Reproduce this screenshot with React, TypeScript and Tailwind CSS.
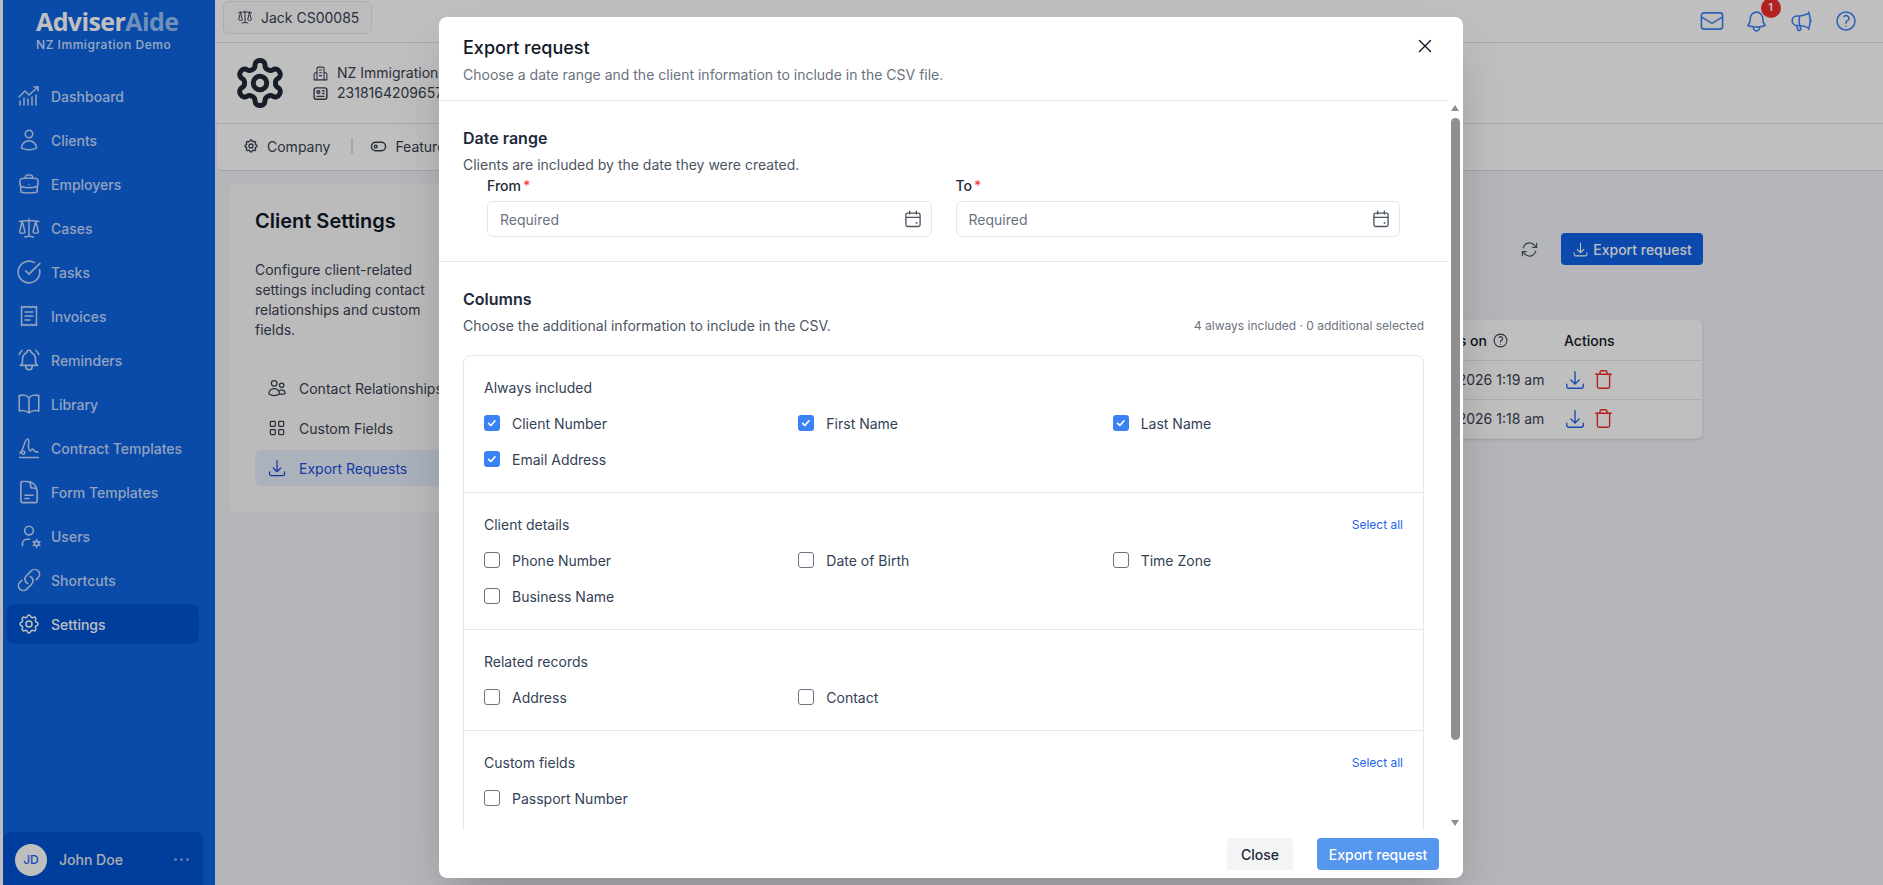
import { ReactNode } from 'react';
import {
  HiOutlineArrowDownTray,
  HiOutlineArrowPath,
  HiOutlineBell,
  HiOutlineBookOpen,
  HiOutlineBriefcase,
  HiOutlineDocumentText,
  HiOutlineEnvelope,
  HiOutlineLink,
  HiOutlineMegaphone,
  HiOutlineQuestionMarkCircle,
  HiOutlineScale,
  HiOutlineUser,
  HiOutlineUsers,
  HiOutlineXMark,
} from 'react-icons/hi2';
import {
  TbBellRinging,
  TbId,
  TbLayoutGrid,
  TbSettings,
  TbToggleLeft,
  TbUserCog,
} from 'react-icons/tb';
import { LuCircleCheckBig, LuSettings, LuTrash } from 'react-icons/lu';

function DashboardIcon({ className }: { className?: string }) {
  return (
    <svg viewBox="0 0 24 24" fill="none" stroke="currentColor" strokeWidth="1.5" strokeLinecap="round" strokeLinejoin="round" className={className}>
      <path d="M2 13l6-6 4 4 9-8" />
      <path d="M17 3h4v4" />
      <path d="M3 21v-4M7 21v-7M11 21v-6M15 21v-8M19 21v-10" />
    </svg>
  );
}

function ReceiptIcon({ className }: { className?: string }) {
  return (
    <svg viewBox="0 0 24 24" fill="none" stroke="currentColor" strokeWidth="1.5" strokeLinecap="round" strokeLinejoin="round" className={className}>
      <path d="M4.5 2.5l1.9 1 1.9-1 1.800 1 1.900-1 1.900 1 1.800-1 1.900 1 1.900-1v19l-1.900-1-1.900 1-1.800-1-1.900 1-1.900-1-1.800 1-1.900-1-1.900 1z" />
      <path d="M8 8h8M8 12h8M8 16h5" />
    </svg>
  );
}

function SignatureIcon({ className }: { className?: string }) {
  return (
    <svg viewBox="0 0 24 24" fill="none" stroke="currentColor" strokeWidth="1.5" strokeLinecap="round" strokeLinejoin="round" className={className}>
      <path d="M3 17.500c0-2 2-3 3.500-2.500s2 2.500.5 3-3.500-.500-1.500-5C7 9.500 8.500 3 10.500 3c1.500 0 1.500 3 1 6-.4 2.500.5 6 1.500 6s1.500-2 2.500-2 1 2 2.500 2.500 3 .5 3 .5" />
      <path d="M2.500 21.500h19" />
    </svg>
  );
}

function BuildingIcon({ className }: { className?: string }) {
  return (
    <svg viewBox="0 0 24 24" fill="none" stroke="currentColor" strokeWidth="1.5" strokeLinecap="round" strokeLinejoin="round" className={className}>
      <path d="M7 21V5a2 2 0 0 1 2-2h6a2 2 0 0 1 2 2v16" />
      <path d="M7 11H5a2 2 0 0 0-2 2v8h18v-8a2 2 0 0 0-2-2h-2" />
      <path d="M10.500 7h3M10.500 11h3M10.500 15h3" />
    </svg>
  );
}

function CalendarIcon() {
  return (
    <svg viewBox="0 0 24 24" fill="none" stroke="currentColor" strokeWidth="1.6" strokeLinecap="round" strokeLinejoin="round" className="size-[20px] text-[#4b5563]">
      <rect x="3.500" y="5" width="17" height="16" rx="2" />
      <path d="M8 2.500V6M16 2.500V6M3.500 10h17" />
      <path d="M16 16.500h.5v.5H16z" fill="currentColor" />
    </svg>
  );
}

const navItems = [
  { label: 'Dashboard', icon: <DashboardIcon className="size-[24px]" /> },
  { label: 'Clients', icon: <HiOutlineUser className="size-[24px]" /> },
  { label: 'Employers', icon: <HiOutlineBriefcase className="size-[24px]" /> },
  { label: 'Cases', icon: <HiOutlineScale className="size-[24px]" /> },
  { label: 'Tasks', icon: <LuCircleCheckBig className="size-[26px] stroke-[1.5]" /> },
  { label: 'Invoices', icon: <ReceiptIcon className="size-[24px]" /> },
  { label: 'Reminders', icon: <TbBellRinging className="size-[26px] stroke-[1.5]" /> },
  { label: 'Library', icon: <HiOutlineBookOpen className="size-[26px]" /> },
  { label: 'Contract Templates', icon: <SignatureIcon className="size-[24px]" /> },
  { label: 'Form Templates', icon: <HiOutlineDocumentText className="size-[26px]" /> },
  { label: 'Users', icon: <TbUserCog className="size-[26px] stroke-[1.5]" /> },
  { label: 'Shortcuts', icon: <HiOutlineLink className="size-[26px]" /> },
  { label: 'Settings', icon: <TbSettings className="size-[24px] stroke-[1.5]" />, active: true },
];

function Sidebar() {
  return (
    <aside className="flex h-full w-[212px] shrink-0 flex-col bg-[#0e63e2]">
      <div className="h-[76px] pl-[33px] pt-[6px]">
        <div className="font-['Open_Sans'] text-[25px] leading-[30px] font-bold tracking-[-0.6px] text-white">
          Adviser<span className="text-[#93c0f8]">Aide</span>
        </div>
        <div className="mt-[1px] text-[12px] leading-[16px] font-medium tracking-[0.55px] text-[#cfe3ff]">NZ Immigration Demo</div>
      </div>
      <nav className="flex flex-col gap-[4px] px-[4px]">
        {navItems.map((item) => (
          <div
            key={item.label}
            className={`flex h-[40px] w-[192px] items-center rounded-lg pl-[9px] text-[14px] font-medium ${
              item.active ? 'bg-[#0053d2] text-white' : 'text-[#c3dafe]'
            }`}
          >
            <span className="flex w-[26px] justify-center">{item.icon}</span>
            <span className="ml-[9px]">{item.label}</span>
          </div>
        ))}
      </nav>
      <div className="mt-auto flex h-[53px] w-[200px] items-center rounded-t-lg bg-[#0053d2] pl-[12px] pr-[14px] pt-[2px]">
        <div className="flex size-[32px] items-center justify-center rounded-full bg-white text-[12px] font-medium text-[#2563eb]">JD</div>
        <span className="ml-[12px] text-[14px] font-medium text-[#e5e7eb]">John Doe</span>
        <span className="ml-auto flex gap-[3px]">
          <i className="size-[3px] rounded-full bg-[#7ea6e0]" />
          <i className="size-[3px] rounded-full bg-[#7ea6e0]" />
          <i className="size-[3px] rounded-full bg-[#7ea6e0]" />
        </span>
      </div>
    </aside>
  );
}

function TopBar() {
  return (
    <header className="flex h-[43px] items-center border-b border-[#e0e2e6] bg-white pl-[8px] pr-[15px]">
      <div className="-mt-[8px] flex h-[33px] w-[149px] items-center gap-[8px] rounded-md border border-[#e5e7eb] bg-[#fbfbfc] pl-[13px] text-[14px] text-[#374151]">
        <HiOutlineScale className="size-[16px]" />
        Jack CS00085
      </div>
      <div className="ml-auto flex items-center text-[#3b82f6]">
        <span className="flex w-[44.5px] justify-center">
          <HiOutlineEnvelope className="size-[26px]" />
        </span>
        <span className="relative flex w-[44.5px] justify-center">
          <HiOutlineBell className="size-[25px]" />
          <span className="absolute -top-[11px] left-[26px] flex size-[20px] items-center justify-center rounded-full bg-[#ef2c2c] text-[11px] font-semibold text-white">1</span>
        </span>
        <span className="flex w-[44.5px] justify-center">
          <HiOutlineMegaphone className="size-[25px]" />
        </span>
        <span className="flex w-[44.5px] justify-center">
          <HiOutlineQuestionMarkCircle className="size-[24px]" />
        </span>
      </div>
    </header>
  );
}

function PageHeader() {
  return (
    <>
      <div className="flex h-[81px] items-center border-b border-[#e0e2e6] bg-white pl-[18px]">
        <LuSettings className="size-[54px] stroke-[2.2] text-[#1f2937]" />
        <div className="ml-[25px] flex flex-col gap-[2px] text-[14px] leading-[18px] text-[#374151]">
          <div className="flex items-center gap-[8px]">
            <BuildingIcon className="size-[17px]" />
            NZ Immigration Services Ltd
          </div>
          <div className="flex items-center gap-[8px]">
            <TbId className="size-[17px]" />
            2318164209657
          </div>
        </div>
      </div>
      <div className="ml-[2px] flex h-[47px] items-center rounded-bl-md border-b border-[#d8dbe2] bg-white pb-[2px] pl-[26px] text-[14px] text-[#374151]">
        <TbSettings className="mr-[8px] size-[16px]" />
        Company
        <span className="ml-[21px] mr-[17px] h-[16px] w-[2px] bg-[#d8dbe2]" />
        <TbToggleLeft className="mr-[8px] size-[17px]" />
        Features
      </div>
    </>
  );
}

function SettingsCard() {
  return (
    <div className="h-[328px] w-[330px] shrink-0 rounded-md bg-[#fafafb] px-[25px] pt-[23px]">
      <h2 className="text-[20px] leading-[28px] font-semibold text-[#111827]">Client Settings</h2>
      <p className="mt-[25px] w-[190px] text-[14px] leading-[20px] text-[#374151]">
        Configure client-related settings including contact relationships and custom fields.
      </p>
      <div className="mt-[30px] flex flex-col gap-[4px] text-[14px] text-[#374151]">
        <div className="flex h-[36px] items-center gap-[12px] pl-[12px]">
          <HiOutlineUsers className="size-[20px]" />
          Contact Relationships
        </div>
        <div className="flex h-[36px] items-center gap-[12px] pl-[12px]">
          <TbLayoutGrid className="size-[20px] stroke-[1.5]" />
          Custom Fields
        </div>
        <div className="flex h-[36px] items-center gap-[12px] rounded-md bg-[#e6eefb] pl-[12px] text-[#1d4ed8]">
          <HiOutlineArrowDownTray className="size-[20px]" />
          Export Requests
        </div>
      </div>
    </div>
  );
}

const exportRows = ['Jan 25, 2026 1:19 am', 'Jan 25, 2026 1:18 am'];

function ExportsPanel() {
  return (
    <div className="ml-[10px] flex w-[1133px] shrink-0 flex-col">
      <div className="mt-[49px] flex items-center justify-end gap-[22px]">
        <HiOutlineArrowPath className="size-[19px] text-[#4b5563]" />
        <button type="button" className="flex h-[32px] w-[142px] items-center justify-center gap-[4px] rounded bg-[#0f62e6] text-[14px] font-medium text-white">
          <HiOutlineArrowDownTray className="size-[17px]" />
          Export request
        </button>
      </div>
      <div className="mt-[54px] rounded-md border border-[#eef0f3] bg-white shadow-sm">
        <div className="flex h-[41px] items-center justify-end border-b border-[#e5e7eb] text-[14px] font-medium text-[#111827]">
          <span className="flex w-[159px] items-center gap-[5px] pl-[12px]">
            Expires on
            <HiOutlineQuestionMarkCircle className="size-[17px] text-[#374151]" />
          </span>
          <span className="w-[138px]">Actions</span>
        </div>
        {exportRows.map((date) => (
          <div key={date} className="flex h-[38.5px] items-center justify-end border-b border-[#e5e7eb] text-[14px] text-[#374151] last:border-b-0">
            <span className="w-[159px]">{date}</span>
            <span className="flex w-[138px] items-center gap-[7px]">
              <HiOutlineArrowDownTray className="size-[22px] text-[#2563eb]" />
              <LuTrash className="size-[21px] stroke-[1.6] text-[#ef2c2c]" />
            </span>
          </div>
        ))}
      </div>
    </div>
  );
}

function DateField({ label }: { label: string }) {
  return (
    <div>
      <label className="block text-[14px] leading-[20px] font-medium text-[#1f2937]">
        {label}
        <span className="ml-[2px] text-[#ef4444]">*</span>
      </label>
      <div className="mt-[5px] flex h-[36px] items-center justify-between rounded-md border border-[#e5e7eb] pl-[12px] pr-[8px] text-[14px] text-[#6b7280]">
        Required
        <CalendarIcon />
      </div>
    </div>
  );
}

function Check({ label, checked }: { label: string; checked?: boolean }) {
  return (
    <div className="flex h-[20px] items-center gap-[12px] text-[14px] text-[#334155]">
      {checked ? (
        <span className="flex size-[16px] items-center justify-center rounded-[3px] bg-[#3b82f6] text-white">
          <svg viewBox="0 0 16 16" fill="none" stroke="currentColor" strokeWidth="2.2" strokeLinecap="round" strokeLinejoin="round" className="size-[12px]">
            <path d="M3.500 8.500l3 2.800 5.500-6.300" />
          </svg>
        </span>
      ) : (
        <span className="size-[16px] rounded-[3px] border border-[#6b7280] bg-white" />
      )}
      {label}
    </div>
  );
}

type ColumnGroup = {
  title: string;
  selectAll?: boolean;
  checked?: boolean;
  items: string[];
};

const columnGroups: ColumnGroup[] = [
  { title: 'Always included', checked: true, items: ['Client Number', 'First Name', 'Last Name', 'Email Address'] },
  { title: 'Client details', selectAll: true, items: ['Phone Number', 'Date of Birth', 'Time Zone', 'Business Name'] },
  { title: 'Related records', items: ['Address', 'Contact'] },
  { title: 'Custom fields', selectAll: true, items: ['Passport Number'] },
];

function Group({ group }: { group: ColumnGroup }) {
  return (
    <div className="border-b border-[#e5e7eb] px-[20px] pb-[23px] pt-[21px] last:border-b-0">
      <div className="flex h-[20px] items-center justify-between pt-[1px] text-[14px] text-[#334155]">
        {group.title}
        {group.selectAll && <span className="text-[12px] text-[#2563eb]">Select all</span>}
      </div>
      <div className="mt-[16px] grid grid-cols-3 gap-x-[24px] gap-y-[16px]">
        {group.items.map((item) => (
          <Check key={item} label={item} checked={group.checked} />
        ))}
      </div>
    </div>
  );
}

function Section({ children, className }: { children: ReactNode; className: string }) {
  return <section className={`px-[24px] ${className}`}>{children}</section>;
}

function ExportModal() {
  return (
    <div className="absolute left-[439px] top-[17px] flex h-[861px] w-[1024px] flex-col rounded-lg bg-white shadow-2xl">
      <div className="mr-[14px] flex h-[84px] shrink-0 border-b border-[#e5e7eb] pl-[24px] pt-[18px]">
        <div>
          <h3 className="text-[18px] leading-[26px] font-medium text-[#111827]">Export request</h3>
          <p className="mt-[4px] text-[14px] leading-[20px] text-[#6b7280]">Choose a date range and the client information to include in the CSV file.</p>
        </div>
        <HiOutlineXMark className="absolute right-[27px] top-[18px] size-[22px] text-[#111827]" />
      </div>
      <div className="relative min-h-0 flex-1 overflow-hidden">
        <div className="mr-[14px]">
          <Section className="h-[161px] border-b border-[#e5e7eb] pr-[26px] pt-[25px]">
            <h4 className="text-[16px] leading-[24px] font-semibold text-[#1e293b]">Date range</h4>
            <p className="mt-[5px] text-[14px] leading-[20px] text-[#4b5563]">Clients are included by the date they were created.</p>
            <div className="mt-[1px] grid grid-cols-2 gap-[24px] pl-[24px] pr-[23px]">
              <DateField label="From" />
              <DateField label="To" />
            </div>
          </Section>
          <Section className="pr-[25px] pt-[25px]">
            <h4 className="text-[16px] leading-[24px] font-semibold text-[#1e293b]">Columns</h4>
            <div className="mt-[5px] flex items-center justify-between">
              <p className="text-[14px] leading-[20px] text-[#4b5563]">Choose the additional information to include in the CSV.</p>
              <span className="text-[12px] text-[#6b7280]">4 always included · 0 additional selected</span>
            </div>
            <div className="mt-[19px] h-[520px] rounded-lg border border-[#e5e7eb]">
              {columnGroups.map((group) => (
                <Group key={group.title} group={group} />
              ))}
            </div>
          </Section>
        </div>
        <div className="absolute bottom-0 right-[3px] top-0 w-[9px]">
          <span className="absolute left-0 top-[4px] h-0 w-0 border-x-[4.5px] border-b-[6px] border-x-transparent border-b-[#8f8f8f]" />
          <span className="absolute left-0 right-0 top-[17px] h-[622px] rounded-full bg-[#8f8f8f]" />
          <span className="absolute bottom-[4px] left-0 h-0 w-0 border-x-[4.5px] border-t-[6px] border-x-transparent border-t-[#8f8f8f]" />
        </div>
      </div>
      <div className="flex h-[48px] shrink-0 justify-end gap-[24px] pr-[24px] pt-[8px]">
        <button type="button" className="h-[32px] w-[66px] rounded bg-[#f3f4f6] text-[14px] font-medium text-[#1f2937]">Close</button>
        <button type="button" className="h-[32px] w-[122px] rounded bg-[#5596ee] text-[14px] font-medium text-white">Export request</button>
      </div>
    </div>
  );
}

export default function App() {
  return (
    <div className="relative flex h-screen overflow-hidden bg-[#fcfcfc] pl-[3px] font-['Inter',sans-serif]">
      <Sidebar />
      <main className="flex min-w-0 flex-1 flex-col bg-[#f1f3f7]">
        <TopBar />
        <PageHeader />
        <div className="flex pl-[15px] pt-[13px]">
          <SettingsCard />
          <ExportsPanel />
        </div>
      </main>
      <div className="absolute inset-0 bg-black/25" />
      <ExportModal />
    </div>
  );
}
